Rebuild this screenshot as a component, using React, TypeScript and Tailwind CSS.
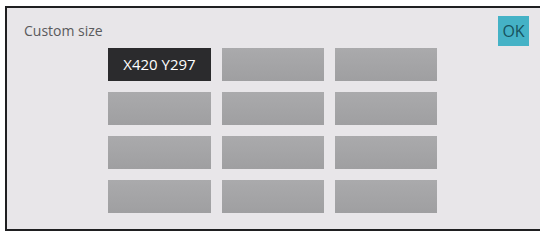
export default function App() {
  const cells = Array.from({ length: 12 }, (_, i) => i);

  return (
    <div className="h-[231px] w-[540px] bg-white pl-[5px] pt-[6px] font-['Open_Sans',sans-serif]">
      <div className="flex h-[225px] flex-col border-b-2 border-l-2 border-t-2 border-[#1f1f21] bg-[#e8e6e9] pr-[11px] pt-[8px]">
        <div className="flex items-start justify-between">
          <div className="ml-[17px] mt-[5px] text-[14px] leading-[20px] text-[#5a5a5c]">Custom size</div>
          <button className="flex h-[30px] w-[31px] items-center justify-center bg-[#45b2c6] text-[16px] text-[#17525e]">
            OK
          </button>
        </div>
        <div className="ml-[101px] mt-[2px] grid grid-cols-[103px_102px_102px] gap-x-[11px] gap-y-[11px]">
          {cells.map((i) =>
            i === 0 ? (
              <div
                key={i}
                className="flex h-[33px] items-center justify-center bg-[#2b2b2d] text-[15px] text-white"
              >
                X420 Y297
              </div>
            ) : (
              <div key={i} className="h-[33px] bg-gradient-to-b from-[#aaaaac] to-[#9f9fa1]" />
            )
          )}
        </div>
      </div>
    </div>
  );
}
